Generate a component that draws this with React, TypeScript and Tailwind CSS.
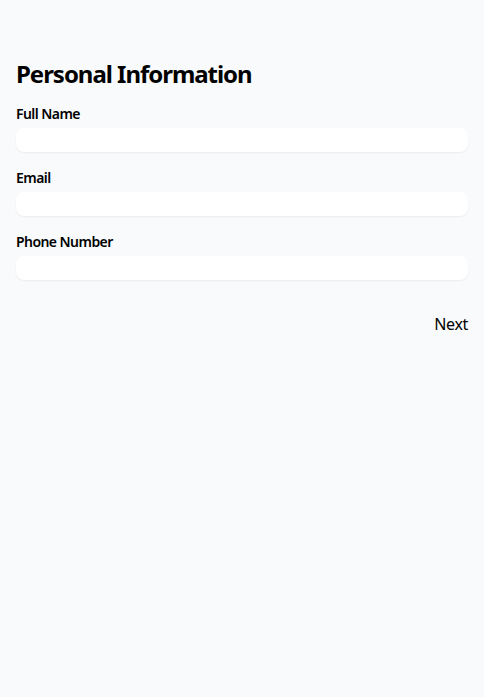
export default function App() {
  const fields = ['Full Name', 'Email', 'Phone Number']

  return (
    <div className="min-h-screen bg-[#f9fafb] font-['Noto_Sans',sans-serif] tracking-[-0.035em] text-black">
      <div className="px-4 pt-[58px]">
        <h1 className="text-2xl font-bold leading-8 mb-[14px] tracking-[-0.043em]">Personal Information</h1>
        <div className="space-y-4">
          {fields.map((label) => (
            <div key={label}>
              <label className="block text-sm font-semibold leading-5 mb-1">{label}</label>
              <input
                type="text"
                className="block w-full h-6 rounded-lg bg-white shadow-[0_1px_2px_rgba(0,0,0,0.06)] outline-none"
              />
            </div>
          ))}
        </div>
        <div className="flex justify-end mt-8">
          <button className="text-base leading-6 tracking-[-0.02em]">Next</button>
        </div>
      </div>
    </div>
  )
}
